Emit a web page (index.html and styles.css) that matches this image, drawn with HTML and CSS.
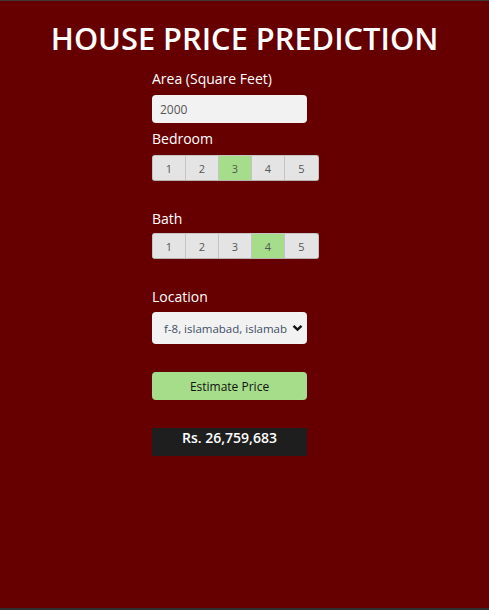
FILE: index.html
```html
<!DOCTYPE html>
<html>
<head>
<meta charset="utf-8">
<link rel="stylesheet" href="styles.css">
</head>
<body>
<div class="page">
  <h1 class="title">HOUSE PRICE PREDICTION</h1>
  <form class="form">
    <label class="label">Area (Square Feet)</label>
    <input class="input" type="text" value="2000">
    <label class="label label-bed">Bedroom</label>
    <div class="switch">
      <span class="opt">1</span><span class="opt">2</span><span class="opt on">3</span><span class="opt">4</span><span class="opt">5</span>
    </div>
    <label class="label label-bath">Bath</label>
    <div class="switch switch-bath">
      <span class="opt">1</span><span class="opt">2</span><span class="opt">3</span><span class="opt on">4</span><span class="opt">5</span>
    </div>
    <label class="label label-loc">Location</label>
    <div class="select">
      <span class="select-text">f-8, islamabad, islamab</span>
      <svg class="chev" width="11" height="8" viewBox="0 0 11 8"><path d="M1.5 1.8 L5.5 5.6 L9.5 1.8" fill="none" stroke="#111" stroke-width="2.4"/></svg>
    </div>
    <button class="btn" type="button">Estimate Price</button>
    <div class="result">Rs. 26,759,683</div>
  </form>
</div>
</body>
</html>
```
FILE: styles.css
```css
html, body { margin: 0; padding: 0; }
body { background: #333; }
.page {
  box-sizing: border-box;
  height: 610px;
  background: #660000;
  border-top: 1px solid #3a3a3a;
  border-bottom: 2px solid #2e2e2e;
  font-family: "Open Sans", "Noto Sans", sans-serif;
  color: #fff;
}
.title {
  margin: 0;
  padding-top: 17px;
  text-align: center;
  font-size: 30.8px;
  font-weight: 600;
  line-height: 40px;
  letter-spacing: 0;
}
.form {
  display: flex;
  flex-direction: column;
  align-items: flex-start;
  margin: 11px 0 0 152px;
}
.label {
  font-size: 14px;
  line-height: 20px;
  color: #fff;
}
.input {
  box-sizing: border-box;
  margin-top: 6px;
  width: 155px;
  height: 28px;
  border: none;
  border-radius: 4px;
  background: #f2f2f2;
  padding: 0 8px;
  font-family: "Open Sans", sans-serif;
  font-size: 12px;
  color: #555;
}
.label-bed { margin-top: 6px; }
.switch {
  margin-top: 6px;
  display: flex;
  height: 26px;
  box-sizing: border-box;
  border: 1px solid #c4c4c4;
  border-bottom-color: #b4b4b4;
  border-radius: 3px;
  overflow: hidden;
  background: #e4e4e4;
}
.switch-bath { margin-top: 4px; }
.opt {
  box-sizing: border-box;
  width: 33px;
  display: flex;
  align-items: center;
  justify-content: center;
  font-size: 11px;
  color: #555;
  border-right: 1px solid #c4c4c4;
  background: #e4e4e4;
}
.opt:last-child { border-right: none; }
.opt.on { background: #a6dd8a; }
.label-bath { margin-top: 28px; }
.label-loc { margin-top: 28px; }
.select {
  box-sizing: border-box;
  margin-top: 5px;
  width: 155px;
  height: 32px;
  border-radius: 4px;
  background: #f2f2f2;
  display: flex;
  align-items: center;
  justify-content: space-between;
  padding: 0 4px 0 12px;
}
.select-text {
  font-size: 11.5px;
  color: #3d4f66;
  white-space: nowrap;
  overflow: hidden;
}
.chev { flex: none; }
.btn {
  margin-top: 28px;
  width: 155px;
  height: 28px;
  border: none;
  border-radius: 4px;
  background: #a6dd8a;
  font-family: "Open Sans", sans-serif;
  font-size: 12px;
  color: #111;
  padding: 0;
}
.result {
  margin-top: 28px;
  box-sizing: border-box;
  width: 155px;
  height: 28px;
  background: #1e1e1e;
  text-align: center;
  font-size: 14px;
  font-weight: 600;
  line-height: 20px;
  color: #fff;
}
```
